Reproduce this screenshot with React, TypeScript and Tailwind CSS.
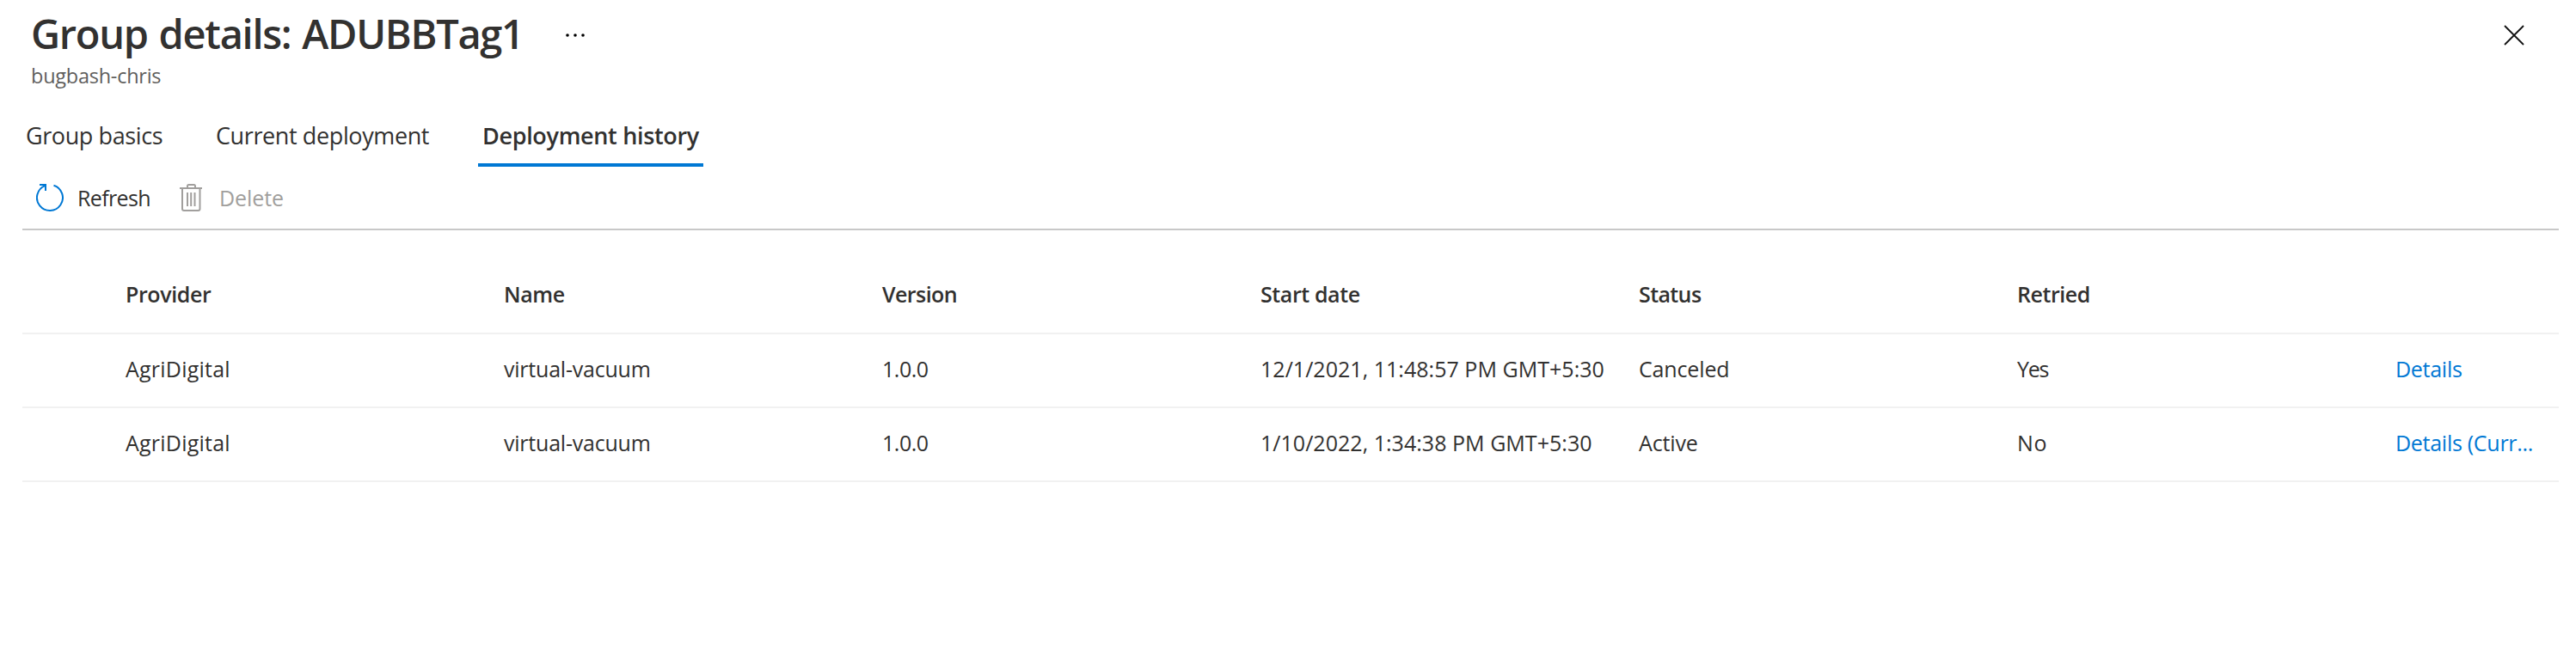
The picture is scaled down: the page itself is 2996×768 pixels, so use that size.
import type { ReactNode } from 'react';

const columns = [
  { label: 'Provider', tracking: 'tracking-[-0.4px]' },
  { label: 'Name', tracking: 'tracking-[-0.4px]' },
  { label: 'Version', tracking: 'tracking-[-0.57px]' },
  { label: 'Start date', tracking: 'tracking-[-0.4px]' },
  { label: 'Status', tracking: 'tracking-[-0.6px]' },
  { label: 'Retried', tracking: 'tracking-[-0.45px]' },
];

const deployments = [
  { date: '12/1/2021, 11:48:57 PM GMT+5:30', status: 'Canceled', retried: 'Yes', retriedTracking: 'tracking-[-1.3px]', link: 'Details' },
  { date: '1/10/2022, 1:34:38 PM GMT+5:30', status: 'Active', retried: 'No', retriedTracking: 'tracking-[0.8px]', link: 'Details (Curr...' },
];

function RefreshIcon() {
  return (
    <svg width="32" height="32" viewBox="0 0 32 32" fill="none" stroke="#0078d4" strokeWidth="2">
      <path d="M20.5 1.7A15 15 0 1 1 10.3 2.1" />
      <path d="M4 1H11V8" />
    </svg>
  );
}

function TrashIcon() {
  return (
    <svg width="26" height="32" viewBox="0 0 26 32" fill="none" stroke="#a19f9d" strokeWidth="2">
      <path d="M0 5H26M9 5V2.5Q9 1 10.5 1H16.5Q18 1 18 2.5V5M3 5V29Q3 31 5 31H21.5Q23.5 31 23.5 29V5M9 10V26M13.2 10V26M17.5 10V26" />
    </svg>
  );
}

function Row({ children, className }: { children: ReactNode; className: string }) {
  return (
    <div className={`grid grid-cols-[440px_440px_440px_440px_440px_440px_1fr] items-center border-b-2 border-[#f1f1f1] pl-[120px] whitespace-nowrap ${className}`}>
      {children}
    </div>
  );
}

export default function App() {
  return (
    <main className="flex min-h-[768px] w-[2996px] flex-col bg-white font-['Open_Sans',sans-serif] text-[25px] text-[#323130]">
      <header className="flex items-start justify-between pt-[7px] pr-[60px] pl-[36px]">
        <div>
          <div className="flex items-center">
            <h1 className="w-[621px] text-[47px] leading-[64px] font-semibold tracking-[-1.3px] [word-spacing:2px] whitespace-nowrap">Group details: ADUBBTag1</h1>
            <svg width="24" height="4" viewBox="0 0 24 4" fill="#000" className="mt-[4px]">
              <circle cx="3" cy="2" r="1.8" />
              <circle cx="12" cy="2" r="1.8" />
              <circle cx="21" cy="2" r="1.8" />
            </svg>
          </div>
          <p className="mt-px text-[23.5px] leading-[32px] tracking-[-0.25px] text-[#605e5c]">bugbash-chris</p>
        </div>
        <svg width="24" height="24" viewBox="0 0 24 24" stroke="#111" strokeWidth="1.8" className="mt-[22px]">
          <path d="M1 1L23 23M23 1L1 23" />
        </svg>
      </header>

      <nav className="mt-[34px] flex h-[56px] pl-[30px] text-[27px] leading-[40px] whitespace-nowrap">
        <span className="w-[221px] tracking-[-0.4px]">Group basics</span>
        <span className="w-[305px] tracking-[-0.39px]">Current deployment</span>
        <span className="w-[262px] border-b-4 border-[#0078d4] pl-[5px] font-semibold tracking-[-0.33px]">Deployment history</span>
      </nav>

      <div className="mr-[20px] ml-[26px] flex h-[74px] items-center border-b-2 border-[#c8c8c8] pl-[16px]">
        <RefreshIcon />
        <span className="ml-[16px] w-[119px] pt-[2px] tracking-[-0.65px]">Refresh</span>
        <TrashIcon />
        <span className="ml-[20px] pt-[2px] tracking-[-0.1px] text-[#a19f9d]">Delete</span>
      </div>

      <section className="mt-[29px] mr-[20px] ml-[26px]">
        <Row className="h-[92px] pt-[2px] font-semibold">
          {columns.map((c) => (
            <span key={c.label} className={c.tracking}>{c.label}</span>
          ))}
        </Row>
        {deployments.map((d) => (
          <Row key={d.date} className="h-[86px] pb-[2.5px]">
            <span className="tracking-[0.22px]">AgriDigital</span>
            <span className="tracking-[-0.22px]">virtual-vacuum</span>
            <span className="tracking-[-0.47px]">1.0.0</span>
            <span className="tracking-[0.03px]">{d.date}</span>
            <span className="tracking-[-0.15px]">{d.status}</span>
            <span className={d.retriedTracking}>{d.retried}</span>
            <a className="tracking-[-0.28px] text-[#0078d4]">{d.link}</a>
          </Row>
        ))}
      </section>
    </main>
  );
}
